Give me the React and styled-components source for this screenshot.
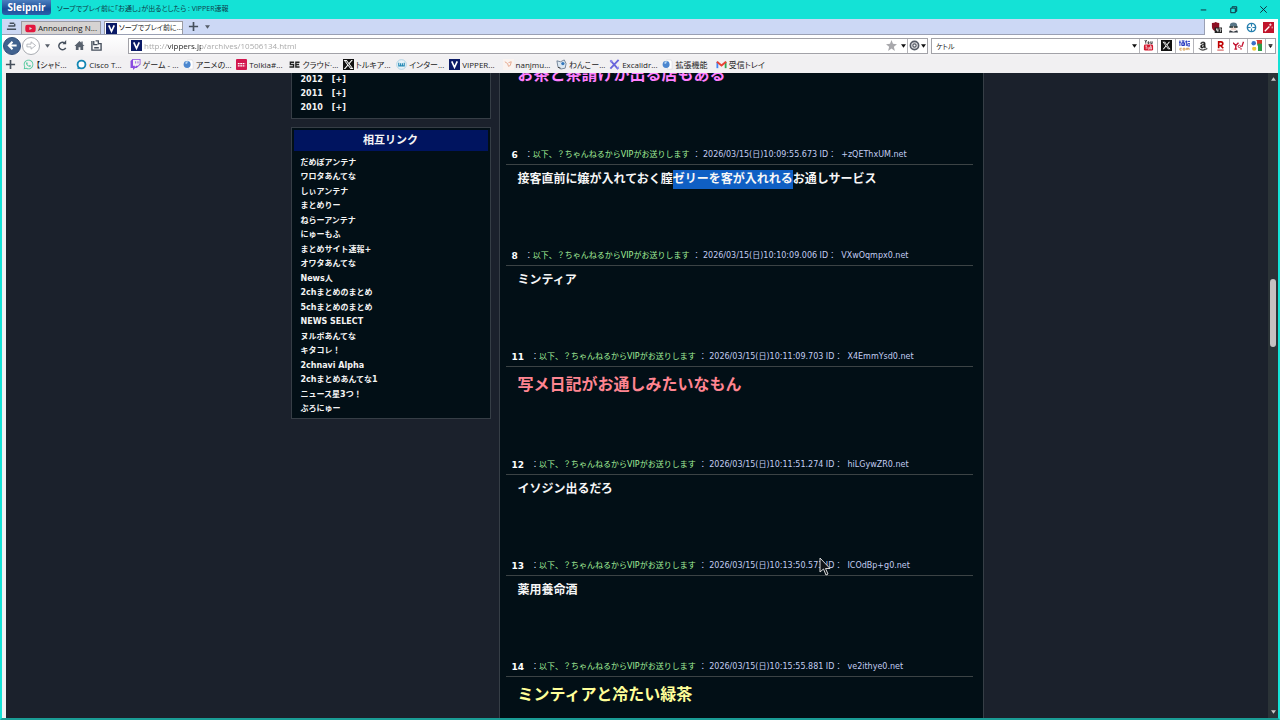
import React from "react";
import styled, { createGlobalStyle, css } from "styled-components";
import { FaYoutube, FaWhatsapp, FaTwitch, FaXTwitter, FaAmazon } from "react-icons/fa6";

const uiFont = `"Open Sans", "Noto Sans CJK JP", sans-serif`;
const pageFont = `"DejaVu Sans", "Noto Sans CJK JP", sans-serif`;

const GlobalStyle = createGlobalStyle`
  * {
    box-sizing: border-box;
  }
  body {
    margin: 0;
    overflow: hidden;
  }
  button, input {
    margin: 0;
    padding: 0;
    border: 0;
    background: none;
    font: inherit;
    color: inherit;
    outline: none;
  }
  ul {
    margin: 0;
    padding: 0;
    list-style: none;
  }
  a {
    color: inherit;
    text-decoration: none;
  }
`;

const Window = styled.div`
  position: relative;
  display: flex;
  flex-direction: column;
  height: 100vh;
  background: #14e2d6;
  font: 8px/12px ${uiFont};
  font-feature-settings: "palt";
  color: #222;
`;

const Icon = styled.svg`
  flex: none;
  width: 11px;
  height: 11px;
`;

const CaretIcon = styled.svg`
  flex: none;
  width: 5px;
  height: 4px;
  fill: currentColor;
`;

const DarkTile = styled.span`
  display: flex;
  flex: none;
  align-items: center;
  justify-content: center;
  width: 11px;
  height: 11px;
  background: #111;
  color: #fff;
  svg {
    width: 9px;
    height: 9px;
  }
`;

const AmazonTile = styled.span`
  display: flex;
  flex-direction: column;
  align-items: center;
  color: #222;
  svg {
    width: 10px;
    height: 10px;
  }
  path {
    stroke: #222;
    stroke-width: 12px;
  }
`;

const TitleBar = styled.header`
  display: flex;
  flex: none;
  height: 19px;
  padding: 0 2px;
`;

const Brand = styled.div`
  width: 49px;
  height: 15px;
  border-radius: 0 0 3px 3px;
  background: linear-gradient(#4b7fc0, #1c4b95 60%, #2a62ad);
  color: #fff;
  font-size: 10px;
  font-weight: 700;
  line-height: 14px;
  text-align: center;
`;

const Title = styled.div`
  flex: 1;
  padding: 3px 6px 0;
  font-size: 7px;
  color: #0d3d4a;
`;

const WindowButton = styled.button`
  display: flex;
  align-items: center;
  justify-content: center;
  width: 30px;
  height: 18px;
`;

const Frame = styled.div`
  display: flex;
  flex: 1;
  flex-direction: column;
  min-height: 0;
  border: solid #14e2d6;
  border-width: 0 2px;
  border-bottom: 2px solid #1a9c95;
  background: #f1f0f2;
`;

const TabRow = styled.div`
  display: flex;
  flex: none;
  height: 16px;
`;

const TabStrip = styled.div`
  display: flex;
  flex: 1;
  align-items: flex-end;
  border: solid #9aa0b4;
  border-width: 0 1px 1px 0;
  background: #ccd8f5;
`;

const Tab = styled.button`
  display: flex;
  align-items: center;
  gap: 2px;
  width: ${(p) => p.$width}px;
  height: 13px;
  margin-right: 3px;
  padding: 0 ${(p) => (p.$active ? 1 : 3)}px;
  border: 1px solid #9b9ba2;
  border-bottom: 0;
  background: ${(p) => (p.$active ? "#ffffff" : "#d6d3d2")};
  font-size: ${(p) => (p.$active ? 7 : 8)}px;
  white-space: nowrap;
  svg {
    flex: none;
    width: 11px;
    height: 11px;
  }
`;

const ToolButton = styled.button`
  display: flex;
  flex: none;
  align-items: center;
  justify-content: center;
  align-self: stretch;
  width: ${(p) => p.$width}px;
  color: ${(p) => (p.$dark ? "#111" : "#565d68")};
`;

const Extensions = styled.div`
  display: flex;
  justify-content: space-between;
  width: 73px;
  padding: 0 2px 0 4px;
  background: #fff;
`;

const NavRow = styled.div`
  display: flex;
  flex: none;
  align-items: center;
  height: 21px;
  padding: 0 2px 0 1px;
  background: linear-gradient(#ffffff, #f3f2f4);
`;

const RoundButton = styled.button`
  display: flex;
  flex: none;
  align-items: center;
  justify-content: center;
  width: 18px;
  height: 18px;
  margin-right: 1px;
  border: 1px solid ${(p) => (p.$primary ? "#33507c" : "#a9acb2")};
  border-radius: 50%;
  background: ${(p) => (p.$primary ? "#41628f" : "#fff")};
`;

const inputBox = css`
  display: flex;
  align-items: center;
  height: 16px;
  border: 1px solid #a2a2a8;
  background: #fff;
`;

const AddressBox = styled.div`
  ${inputBox}
  flex: 801;
  margin-left: 23px;
  padding-left: 2px;
`;

const AddressInput = styled.input`
  flex: 1;
  min-width: 0;
  height: 14px;
  margin-left: 2px;
  background: linear-gradient(90deg, #a3a3a3 23px, #222 23px, #222 57px, #a3a3a3 57px);
  background-clip: text;
  -webkit-text-fill-color: transparent;
`;

const SearchBox = styled.div`
  ${inputBox}
  flex: 345;
  margin-left: 3px;
`;

const SearchInput = styled.input`
  flex: 1;
  min-width: 0;
  height: 14px;
  padding-left: 4px;
  font-size: 7px;
`;

const BoxButton = styled(ToolButton)`
  gap: 1px;
  border-left: 1px solid #b5b5ba;
  color: #111;
`;

const BookmarkRow = styled.div`
  display: flex;
  flex: none;
  height: 17px;
`;

const Bookmarks = styled.nav`
  display: grid;
  grid-template-columns: repeat(14, 1fr);
  width: 746px;
  margin-left: 4px;
`;

const Bookmark = styled.a`
  display: flex;
  align-items: center;
  gap: 2px;
  min-width: 0;
  white-space: nowrap;
  svg {
    flex: none;
    width: 11px;
    height: 11px;
  }
`;

const Viewport = styled.main`
  display: flex;
  flex: 1;
  min-height: 0;
  margin-left: 4px;
  background: #1b212c;
  font-family: ${pageFont};
  font-feature-settings: normal;
  overflow: hidden;
`;

const Page = styled.div`
  display: flex;
  flex: 1;
  justify-content: center;
  gap: 8px;
`;

const Sidebar = styled.aside`
  width: 200px;
  color: #f4f4f4;
  font-weight: 700;
  line-height: 14px;
`;

const Panel = styled.section`
  margin-bottom: 8px;
  padding: 2px;
  border: 1px solid #363e46;
  background: #020f16;
  &:first-child {
    margin-top: -4px;
  }
`;

const PanelTitle = styled.h2`
  margin: 0;
  padding-top: 1px;
  background: #00145f;
  font-size: 11px;
  line-height: 20px;
  text-align: center;
`;

const ArchiveList = styled.ul`
  padding: 1px 7px;
  a {
    margin-left: 9px;
  }
`;

const LinkList = styled.ul`
  display: flex;
  flex-direction: column;
  justify-content: space-between;
  min-height: 265px;
  padding: 5px 7px 0;
`;

const SideLink = styled.a`
  &:hover {
    text-decoration: underline;
  }
`;

const Thread = styled.section`
  width: 485px;
  padding: 0 10px 0 6px;
  border: solid #363e46;
  border-width: 0 1px;
  background: #020f16;
  /* scrolled part way through the thread */
  > :first-child {
    margin-top: -16px;
  }
`;

const PostHeader = styled.header`
  display: flex;
  height: 21px;
  padding: 1px 0 0 6px;
  border-bottom: 1px solid #3c4345;
  line-height: 20px;
  color: #d5dcf0;
  white-space: nowrap;
`;

const PostNumber = styled.b`
  margin-right: 7px;
  color: #fff;
  font-size: 9px;
`;

const PostName = styled.span`
  color: #a3f09a;
`;

const PostMeta = styled.span`
  margin-left: 3px;
  color: #c3cdf2;
`;

const PostBody = styled.div`
  padding: 5px 12px 57px;
  color: ${(p) => p.$color || "#f6f6f6"};
  font-size: ${(p) => (p.$color ? 16 : 12)}px;
  font-weight: 700;
  line-height: ${(p) => (p.$color ? 25 : 18)}px;
`;

const Selected = styled.mark`
  padding: 2px 0 3px;
  background: #0f5fc4;
  color: inherit;
`;

const ScrollTrack = styled.div`
  display: flex;
  flex-direction: column;
  align-items: center;
  width: 10px;
  padding: 4px 0;
  background: #2b3337;
  color: #c8c8c8;
  > :first-child {
    transform: rotate(180deg);
  }
  > :last-child {
    margin-top: auto;
  }
`;

const ScrollThumb = styled.div`
  width: 6px;
  height: 68px;
  margin-top: 198px;
  border-radius: 3px;
  background: #c4c1c1;
`;

const Pointer = styled.svg`
  position: absolute;
  left: 819px;
  top: 557px;
  width: 12px;
  height: 20px;
`;

const archives = ["2012", "2011", "2010"];

const links = [
  "だめぽアンテナ",
  "ワロタあんてな",
  "しぃアンテナ",
  "まとめりー",
  "ねらーアンテナ",
  "にゅーもふ",
  "まとめサイト速報+",
  "オワタあんてな",
  "News人",
  "2chまとめのまとめ",
  "5chまとめのまとめ",
  "NEWS SELECT",
  "ヌルポあんてな",
  "キタコレ！",
  "2chnavi Alpha",
  "2chまとめあんてな1",
  "ニュース星3つ！",
  "ぶろにゅー",
];

const posts = [
  {
    no: 6,
    date: "2026/03/15(日)10:09:55.673",
    id: "+zQEThxUM.net",
    body: (
      <>
        接客直前に嬢が入れておく膣<Selected>ゼリーを客が入れれる</Selected>お通しサービス
      </>
    ),
  },
  { no: 8, date: "2026/03/15(日)10:10:09.006", id: "VXwOqmpx0.net", body: "ミンティア" },
  { no: 11, date: "2026/03/15(日)10:11:09.703", id: "X4EmmYsd0.net", body: "写メ日記がお通しみたいなもん", color: "#ff8591" },
  { no: 12, date: "2026/03/15(日)10:11:51.274", id: "hiLGywZR0.net", body: "イソジン出るだろ" },
  { no: 13, date: "2026/03/15(日)10:13:50.573", id: "ICOdBp+g0.net", body: "薬用養命酒" },
  { no: 14, date: "2026/03/15(日)10:15:55.881", id: "ve2ithye0.net", body: "ミンティアと冷たい緑茶", color: "#ffff99" },
];

const VIcon = () => (
  <Icon viewBox="0 0 12 12">
    <rect width="12" height="12" fill="#0a1a66" />
    <path d="M3 2.5 L6 9 L9 2.5" fill="none" stroke="#fff" strokeWidth="1.8" />
  </Icon>
);

const XIcon = () => (
  <DarkTile>
    <FaXTwitter />
  </DarkTile>
);

const Globe = () => (
  <Icon viewBox="0 0 12 12">
    <path d="M5 1h5l1 2v8H6z" fill="#fff" stroke="#d5d5da" strokeWidth=".6" />
    <circle cx="4.5" cy="6" r="3.8" fill="#4b86cf" />
    <path d="M2.5 4q1.500-2 3-1.500L4.500 5 3 5.500z" fill="#b7d8f5" />
  </Icon>
);

const Ring = () => (
  <Icon viewBox="0 0 12 12">
    <circle cx="6" cy="6" r="4.3" fill="#fff" stroke="#1387b4" strokeWidth="2" />
    <path d="M2 8.5 1.5 11 5 10.5" fill="#1387b4" />
  </Icon>
);

const Plus = () => (
  <Icon viewBox="0 0 12 12">
    <path d="M6 1v10M1 6h10" stroke="#454f5c" strokeWidth="1.8" />
  </Icon>
);

const Caret = () => (
  <CaretIcon viewBox="0 0 6 4">
    <path d="M0 0h6L3 4z" />
  </CaretIcon>
);

const bookmarks = [
  { label: "【シャド...", icon: <FaWhatsapp color="#4cc79a" /> },
  { label: "Cisco T...", icon: <Ring /> },
  { label: "ゲーム - ...", icon: <FaTwitch color="#8a4be0" /> },
  { label: "アニメの...", icon: <Globe /> },
  {
    label: "Tolkia#...",
    icon: (
      <Icon viewBox="0 0 12 12">
        <rect width="12" height="12" rx="1" fill="#d3164f" />
        <path d="M2 5h8M2 7.5h8" stroke="#fff" strokeWidth="1.3" strokeDasharray="2 .6" />
      </Icon>
    ),
  },
  {
    label: "クラウド·...",
    icon: (
      <Icon viewBox="0 0 12 12">
        <path d="M5.5 3.5H1.5V6H5v2.700H.5M11.5 3.5H7.5v5.200h4M7 6h4" fill="none" stroke="#222" strokeWidth="1.5" />
      </Icon>
    ),
  },
  { label: "トルキア...", icon: <XIcon /> },
  {
    label: "インター...",
    icon: (
      <Icon viewBox="0 0 12 12">
        <circle cx="6" cy="6" r="5.3" fill="#e6f2f8" stroke="#9fcbdf" strokeWidth=".8" />
        <path d="M3 4v3.500h2V4.500v3h2v-3v3h2V4" fill="none" stroke="#2589b5" strokeWidth="1.2" />
      </Icon>
    ),
  },
  { label: "VIPPER...", icon: <VIcon /> },
  {
    label: "nanjmu...",
    icon: (
      <Icon viewBox="0 0 12 12">
        <rect width="12" height="12" fill="#faf3f0" />
        <path d="M2 3l3 2 1 3 2-1 1-4M6 4l3-1" fill="none" stroke="#e5a58a" strokeWidth="1" />
      </Icon>
    ),
  },
  {
    label: "わんこー...",
    icon: (
      <Icon viewBox="0 0 12 12">
        <path d="M1 2l4 1 4-2 2 4-1 5-5 1-3-3z" fill="#dce8f2" stroke="#52677e" strokeWidth=".8" />
        <circle cx="7.5" cy="5" r="1.8" fill="#3478bd" />
        <path d="M2 9l3 1" stroke="#333" />
      </Icon>
    ),
  },
  {
    label: "Excalidr...",
    icon: (
      <Icon viewBox="0 0 12 12">
        <path d="M1.5 1.5 10 11M10.5 1 1.5 10.5" stroke="#6965db" strokeWidth="2" />
        <path d="M1 1l3 .5L2 4zM8 10l3 1-.5-3z" fill="#8f8cf0" />
      </Icon>
    ),
  },
  { label: "拡張機能", icon: <Globe /> },
  {
    label: "受信トレイ",
    icon: (
      <Icon viewBox="0 0 12 12">
        <path d="M1.5 10V3" stroke="#4285f4" strokeWidth="2" />
        <path d="M10.5 10V3" stroke="#34a853" strokeWidth="2" />
        <path d="M1 3l5 4 5-4" fill="none" stroke="#ea4335" strokeWidth="2.2" />
      </Icon>
    ),
  },
];

const engines = [
  {
    name: "youtube",
    icon: (
      <Icon viewBox="0 0 12 12">
        <path d="M2 0l1 2 1-2M3 2v2M5.5 2h1v2h-1zM8.5 1.5V4H10V1.5" fill="none" stroke="#222" strokeWidth=".9" />
        <rect x="1" y="5" width="10" height="6.5" rx="1.5" fill="#d3162d" />
        <path d="M2.5 6.5h2M3.5 6.5V10M5.5 7.5V10H7V7.5M8.3 6v4h1V8z" fill="none" stroke="#fff" strokeWidth=".7" />
      </Icon>
    ),
  },
  { name: "x", icon: <XIcon /> },
  {
    name: "kakaku",
    icon: (
      <Icon viewBox="0 0 12 12">
        <path d="M1 .5v6M0 2.500h2M3 1h3M3 3h3v3H3zM4.500 1v5M8 .5v6M6.800 2h2.400M9.500 1.500h2.500M9.500 4H12v2.500H9.500z" stroke="#1a2dbb" fill="none" />
        <path d="M3 9H1v2h2M4.5 9h2v2h-2zM8 11V9h3v2M9.5 9v2" stroke="#d08b30" fill="none" strokeWidth=".8" />
      </Icon>
    ),
  },
  {
    name: "amazon",
    icon: (
      <AmazonTile>
        <FaAmazon />
      </AmazonTile>
    ),
  },
  {
    name: "rakuten",
    icon: (
      <Icon viewBox="0 0 12 12">
        <path d="M4 9V2h2.500a2 2 0 0 1 0 4H4M6 6l3 3" fill="none" stroke="#bf0000" strokeWidth="1.8" />
        <path d="M2.5 11h7" stroke="#bf0000" strokeWidth=".8" />
      </Icon>
    ),
  },
  {
    name: "yahoo",
    icon: (
      <Icon viewBox="0 0 12 12">
        <path d="M0 3l3 3 3-3M3 6v4M1.5 10h3M11.5 2l-2 5.500M9 9l-.5 1.300" fill="none" stroke="#c4122f" strokeWidth="1.5" />
        <circle cx="7" cy="7" r="1.3" fill="none" stroke="#c4122f" />
      </Icon>
    ),
  },
  {
    name: "google",
    icon: (
      <Icon viewBox="0 0 12 12">
        <path d="M6 0h6v5H6z" fill="#d8382c" />
        <path d="M7 4h5v8H7z" fill="#2d9c4a" />
        <circle cx="3" cy="3.5" r="2.5" fill="#3a70c8" />
        <circle cx="3.5" cy="9.5" r="2.3" fill="#f0c83a" />
        <path d="M6 1v4L3.5 7H7v5" fill="none" stroke="#fff" strokeWidth="1.2" />
      </Icon>
    ),
  },
];

export default function App() {
  return (
    <Window>
      <GlobalStyle />
      <TitleBar>
        <Brand>Sleipnir</Brand>
        <Title>ソープでプレイ前に「お通し」が出るとしたら : VIPPER速報</Title>
        <WindowButton aria-label="minimize">
          <Icon viewBox="0 0 12 12">
            <path d="M3 6.5h6" stroke="#123" />
          </Icon>
        </WindowButton>
        <WindowButton aria-label="restore">
          <Icon viewBox="0 0 12 12">
            <path d="M3 4.5h5v5H3zM4.5 4V3h5v5H8.5" fill="none" stroke="#123" />
          </Icon>
        </WindowButton>
        <WindowButton aria-label="close">
          <Icon viewBox="0 0 12 12">
            <path d="M2.5 2.5l7 7M9.5 2.5l-7 7" stroke="#123" />
          </Icon>
        </WindowButton>
      </TitleBar>

      <Frame>
        <TabRow>
          <TabStrip>
            <ToolButton $width={19} aria-label="tab list">
              <Icon viewBox="0 0 12 12">
                <path d="M4 2.500h5M2.500 5.500h7M1 9h10M9.500 3v3" stroke="#454f5c" strokeWidth="1.5" />
              </Icon>
            </ToolButton>
            <Tab $width={80}>
              <FaYoutube color="#e3173e" />
              Announcing N...
            </Tab>
            <Tab $active $width={79}>
              <VIcon />
              ソープでプレイ前に...
            </Tab>
            <ToolButton $width={14} aria-label="new tab">
              <Plus />
            </ToolButton>
            <ToolButton $width={14} aria-label="tab menu">
              <Caret />
            </ToolButton>
          </TabStrip>
          <Extensions>
            <ToolButton $width={14} aria-label="blocker">
              <Icon viewBox="0 0 12 12">
                <path d="M1 1q3 0 4-1 2 1 4 1v5q-1 3-4 4-4-1-4-5z" fill="#8d1024" />
                <rect x="4" y="6" width="8" height="6" fill="#222" />
                <path d="M6 7v2h2M7.5 7v4M9 7.5h2l-1 3.500" fill="none" stroke="#fff" strokeWidth=".8" />
              </Icon>
            </ToolButton>
            <ToolButton $width={14} aria-label="agent">
              <Icon viewBox="0 0 12 12">
                <path d="M2 4q0-3.500 4-3.500T10 4v2H2z" fill="#5a7686" />
                <path d="M3 5h6v4H3z" fill="#f1d6cc" />
                <path d="M1.500 5.500h4M6.500 5.500h4" stroke="#233" strokeWidth="1.800" />
                <path d="M1 11.500l1-2.500 4 1.500L10 9l1 2.500z" fill="#30363e" />
              </Icon>
            </ToolButton>
            <ToolButton $width={14} aria-label="target">
              <Icon viewBox="0 0 12 12">
                <circle cx="6" cy="6" r="4.5" fill="#fff" stroke="#257fae" strokeWidth="1.6" />
                <path d="M6 2v3M6 7v3M2 6h3M7 6h3" stroke="#257fae" strokeWidth="1.2" />
              </Icon>
            </ToolButton>
            <ToolButton $width={14} aria-label="wand">
              <Icon viewBox="0 0 12 12">
                <rect width="12" height="12" fill="#c0142b" />
                <path d="M2 10l5-5" stroke="#fff" strokeWidth="1.5" />
                <path d="M8 1.5v3M6.5 3h3M10 5v2" stroke="#fff" strokeWidth=".8" />
              </Icon>
            </ToolButton>
          </Extensions>
        </TabRow>

        <NavRow>
          <RoundButton $primary aria-label="back">
            <Icon viewBox="0 0 12 12">
              <path d="M10.5 6H2.5M6 2L2 6l4 4" fill="none" stroke="#fff" strokeWidth="2.2" />
            </Icon>
          </RoundButton>
          <RoundButton aria-label="forward">
            <Icon viewBox="0 0 12 12">
              <path d="M1 4.5h4.500V2l5 4-5 4V7.500H1z" fill="#fff" stroke="#a9acb2" strokeWidth=".9" />
            </Icon>
          </RoundButton>
          <ToolButton $width={12} aria-label="history">
            <Caret />
          </ToolButton>
          <ToolButton $width={18} aria-label="reload">
            <Icon viewBox="0 0 12 12">
              <path d="M9.5 8.5A4 4 0 1 1 8 3" fill="none" stroke="#454f5c" strokeWidth="1.7" />
              <path d="M6 4.5h4V0z" fill="#454f5c" />
            </Icon>
          </ToolButton>
          <ToolButton $width={17} aria-label="home">
            <Icon viewBox="0 0 12 12">
              <path d="M6 1L.5 6.5H2V11h3V8h2v3h3V6.500h1.500L9.500 4.500V1.500H8V3z" fill="#58616d" />
            </Icon>
          </ToolButton>
          <ToolButton $width={17} aria-label="save">
            <Icon viewBox="0 0 12 12">
              <path d="M1 1v10h10V4H8.500M3 1v4h4M5 1h3v4M3.5 8.5h5" fill="none" stroke="#454f5c" strokeWidth="1.5" />
            </Icon>
          </ToolButton>
          <AddressBox>
            <VIcon />
            <AddressInput aria-label="address" defaultValue="http://vippers.jp/archives/10506134.html" />
            <ToolButton $width={16} aria-label="favorite">
              <Icon viewBox="0 0 12 12">
                <path d="M6 0l1.600 4.200L12 4.500 8.600 7.300 9.700 12 6 9.300 2.300 12l1.100-4.700L0 4.500l4.400-.3z" fill="#a8a8ac" />
              </Icon>
            </ToolButton>
            <ToolButton $width={8} $dark aria-label="address history">
              <Caret />
            </ToolButton>
            <BoxButton $width={20} aria-label="engine">
              <Icon viewBox="0 0 12 12">
                <circle cx="6" cy="6" r="4.5" fill="#e2e2e6" stroke="#555b66" strokeWidth="1.8" />
                <circle cx="6" cy="6" r="1.8" fill="#fff" stroke="#555b66" strokeWidth="1.3" />
              </Icon>
              <Caret />
            </BoxButton>
          </AddressBox>
          <SearchBox>
            <SearchInput aria-label="search" defaultValue="ケトル" />
            <ToolButton $width={10} $dark aria-label="search history">
              <Caret />
            </ToolButton>
            {engines.map((engine) => (
              <BoxButton key={engine.name} $width={18} aria-label={engine.name}>
                {engine.icon}
              </BoxButton>
            ))}
            <BoxButton $width={10} aria-label="more engines">
              <CaretIcon viewBox="0 0 6 6">
                <path d="M0 0h6v1H0zM0 2h6L3 6z" />
              </CaretIcon>
            </BoxButton>
          </SearchBox>
        </NavRow>

        <BookmarkRow>
          <ToolButton $width={17} aria-label="add bookmark">
            <Plus />
          </ToolButton>
          <Bookmarks>
            {bookmarks.map((item) => (
              <Bookmark key={item.label} href="#">
                {item.icon}
                <span>{item.label}</span>
              </Bookmark>
            ))}
          </Bookmarks>
        </BookmarkRow>

        <Viewport>
          <Page>
            <Sidebar>
              <Panel>
                <ArchiveList>
                  {archives.map((year) => (
                    <li key={year}>
                      {year}
                      <SideLink href="#">[+]</SideLink>
                    </li>
                  ))}
                </ArchiveList>
              </Panel>
              <Panel>
                <PanelTitle>相互リンク</PanelTitle>
                <LinkList>
                  {links.map((name) => (
                    <li key={name}>
                      <SideLink href="#">{name}</SideLink>
                    </li>
                  ))}
                </LinkList>
              </Panel>
            </Sidebar>
            <Thread>
              <PostBody $color="#ff80ff">お茶と茶請けが出る店もある</PostBody>
              {posts.map((post) => (
                <article key={post.no}>
                  <PostHeader>
                    <PostNumber>{post.no}</PostNumber>
                    <span>：</span>
                    <PostName>以下、？ちゃんねるからVIPがお送りします</PostName>
                    <PostMeta>
                      ： {post.date} ID：&nbsp; {post.id}
                    </PostMeta>
                  </PostHeader>
                  <PostBody $color={post.color}>{post.body}</PostBody>
                </article>
              ))}
            </Thread>
          </Page>
          <ScrollTrack>
            <Caret />
            <ScrollThumb />
            <Caret />
          </ScrollTrack>
        </Viewport>
      </Frame>

      <Pointer viewBox="0 0 12 20">
        <path d="M1 1v14l3.500-3 2.500 6 2-1-2.500-5.500H11z" fill="#101418" stroke="#d8d8d8" strokeWidth="1" />
      </Pointer>
    </Window>
  );
}
